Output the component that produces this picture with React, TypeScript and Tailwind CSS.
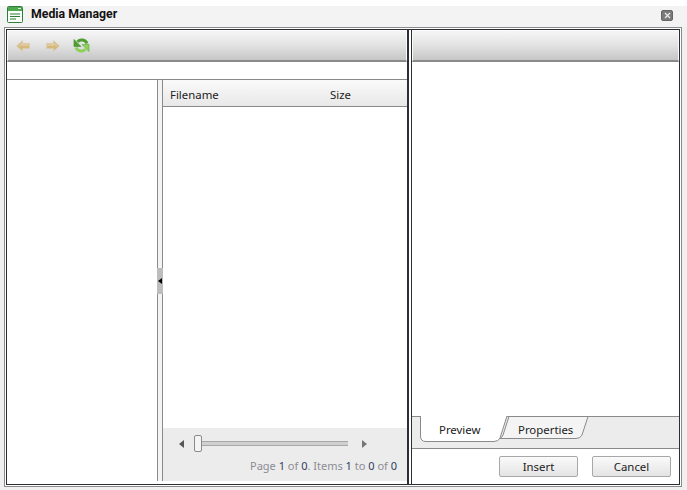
const Toolbar = ({ children }: { children?: React.ReactNode }) => (
  <div className="h-[32px] shrink-0 flex items-center pl-[8px] border-x border-t border-[#fafafa] border-b-[2px] border-b-[#8a8a8a] bg-gradient-to-b from-[#f6f6f6] via-[#e2e2e2] to-[#c6c6c6]">
    {children}
  </div>
);

const Arrow = ({ flip, className }: { flip?: boolean; className?: string }) => (
  <span className={className}>
    <svg width="14" height="12" viewBox="0 0 14 12" className={flip ? "block -scale-x-100" : "block"}>
      <path d="M0.7 6 L6.5 0.7 V3.5 H13.4 V8.5 H6.5 V11.3 Z" fill="#d6b87e" stroke="#d9cba9" strokeWidth="0.8" strokeLinejoin="round" />
      <path d="M3 6 L6 3.8 V5 H13" fill="none" stroke="#e8d8b4" strokeWidth="1" />
    </svg>
  </span>
);

const Refresh = ({ className }: { className?: string }) => (
  <svg width="17" height="17" viewBox="0 0 17 17" className={className}>
    <path d="M14 6.5 A5.7 5.7 0 0 0 4.5 4.8" fill="none" stroke="#4f9f2e" strokeWidth="3" />
    <path d="M1 2.5 V9.5 H8 Z" fill="#4f9f2e" stroke="#3f8a24" strokeWidth="0.6" strokeLinejoin="round" />
    <path d="M3 10.5 A5.7 5.7 0 0 0 12.5 12.2" fill="none" stroke="#8dd05a" strokeWidth="3" />
    <path d="M16 14.5 V7.5 H9 Z" fill="#8dd05a" stroke="#5aa836" strokeWidth="0.6" strokeLinejoin="round" />
  </svg>
);

export default function App() {
  return (
    <div className="w-[687px] h-[490px] flex flex-col bg-[#f0f0f0] overflow-hidden text-[11.4px] text-[#222] font-['Noto_Sans','Open_Sans',sans-serif]">
      <div className="h-[27px] shrink-0 pt-[6px] pl-[7px] pr-[14px] flex items-start bg-gradient-to-b from-white from-[24%] to-[#f3f3f3] to-[24%]">
        <svg width="16" height="17" viewBox="0 0 16 17">
          <rect x="0.5" y="0.5" width="15" height="16" rx="1" fill="#fafdf8" stroke="#2f7d3a" />
          <rect x="1" y="1" width="14" height="4" fill="#4fa84f" />
          <rect x="11" y="2" width="3" height="1" fill="#d6f0d0" />
          <path d="M3 8 H13 M3 10.5 H13 M3 13 H9" stroke="#2f7d3a" strokeWidth="1" />
        </svg>
        <span className="ml-[8px] mt-px text-[12.3px] leading-[15px] font-bold text-[#111] font-['Roboto',sans-serif]">Media Manager</span>
        <span className="ml-auto mt-[4px] w-[12px] h-[11px] rounded-[2px] bg-[#7a7a7a] border border-[#666] flex items-center justify-center">
          <svg width="7" height="7" viewBox="0 0 7 7"><path d="M1 1 L6 6 M6 1 L1 6" stroke="#eee" strokeWidth="1.2" /></svg>
        </span>
      </div>

      <div className="w-[678px] h-[460px] ml-[4px] border border-[#8a8a8a] p-px bg-white">
        <div className="h-full border border-[#2b2f33] flex bg-white">
          <div className="w-[402px] shrink-0 border-r-2 border-[#2b2f33] flex flex-col">
            <Toolbar>
              <Arrow />
              <Arrow flip className="ml-[16px]" />
              <Refresh className="ml-[13px]" />
            </Toolbar>
            <div className="h-[18px] shrink-0 border-b border-[#8a8a8a]" />
            <div className="h-[401px] shrink-0 flex">
              <div className="w-[150px] shrink-0" />
              <div className="w-[6px] shrink-0 border-x border-[#8a8a8a] bg-[#f4f4f4] flex flex-col justify-center">
                <div className="h-[26px] -mx-px bg-[#bdbdbd] flex items-center justify-center">
                  <svg width="4" height="6" viewBox="0 0 4 6"><path d="M0 3 L4 0 V6 Z" fill="#000" /></svg>
                </div>
              </div>
              <div className="flex-1 flex flex-col min-w-0">
                <div className="h-[27px] shrink-0 flex items-center pl-[7px] pt-[3px] border-b border-[#8a8a8a] bg-gradient-to-b from-[#fafafa] to-[#e8e8e8]">
                  <span className="w-[160px]">Filename</span>
                  <span>Size</span>
                </div>
                <div className="flex-1" />
                <div className="h-[53px] shrink-0 bg-[#ececec] pr-[10px] flex flex-col">
                  <div className="h-[30px] shrink-0 flex items-center pl-[16px] pt-px">
                    <svg width="5" height="8" viewBox="0 0 5 8"><path d="M5 0 V8 L0 4 Z" fill="#555" /></svg>
                    <div className="ml-[10px] w-[8px] h-[17px] bg-[#f4f4f4] border border-[#8a8a8a] rounded-[2px]" />
                    <div className="w-[146px] h-[5px] bg-[#d0d0d0] border-y border-[#a8a8a8]" />
                    <svg className="ml-[14px]" width="5" height="8" viewBox="0 0 5 8"><path d="M0 0 V8 L5 4 Z" fill="#777" /></svg>
                  </div>
                  <div className="text-right text-[11px] leading-[16px] text-[#8c8c96] whitespace-nowrap">
                    Page <span className="text-[#2f3f5f]">1</span> of <span className="text-[#2f3f5f]">0</span>. Items <span className="text-[#2f3f5f]">1</span> to <span className="text-[#2f3f5f]">0</span> of <span className="text-[#2f3f5f]">0</span>
                  </div>
                </div>
              </div>
            </div>
          </div>

          <div className="w-[2px] shrink-0" />

          <div className="flex-1 border-l border-[#2b2f33] flex flex-col min-w-0">
            <Toolbar />
            <div className="flex-1" />
            <div className="h-[33px] shrink-0 border-y border-[#8a8a8a] bg-[#ececec] flex pl-[8px]">
              <div className="relative w-[87px] h-[26px] -mt-px flex">
                <svg className="absolute left-0 top-0" width="87" height="26" viewBox="0 0 87 26">
                  <path d="M0.5 0 V20 Q0.5 25.5 6 25.5 H74 Q78.5 25.5 80 22 L87 0" fill="#fff" stroke="#8a8a8a" />
                </svg>
                <span className="relative ml-[19px] mt-[5px]">Preview</span>
              </div>
              <div className="relative -ml-[8px] w-[90px] h-[24px] -mt-px flex">
                <svg className="absolute left-0 top-0" width="90" height="24" viewBox="0 0 90 24">
                  <path d="M0.5 22.5 Q3 22 4 19 L10 0.5 H89 L83 19 Q81.5 22.5 77 22.5 Z" fill="#f4f4f4" stroke="#8a8a8a" />
                </svg>
                <span className="relative ml-[19px] mt-[5px]">Properties</span>
              </div>
            </div>
            <div className="h-[35px] shrink-0 flex justify-end gap-[14px] pr-[8px] pt-[7px]">
              <button className="w-[79px] h-[21px] rounded-[2px] border border-[#a8a8a8] bg-gradient-to-b from-[#fafafa] to-[#e4e4e4] leading-none">Insert</button>
              <button className="w-[79px] h-[21px] rounded-[2px] border border-[#a8a8a8] bg-gradient-to-b from-[#fafafa] to-[#e4e4e4] leading-none">Cancel</button>
            </div>
          </div>
        </div>
      </div>
    </div>
  );
}
